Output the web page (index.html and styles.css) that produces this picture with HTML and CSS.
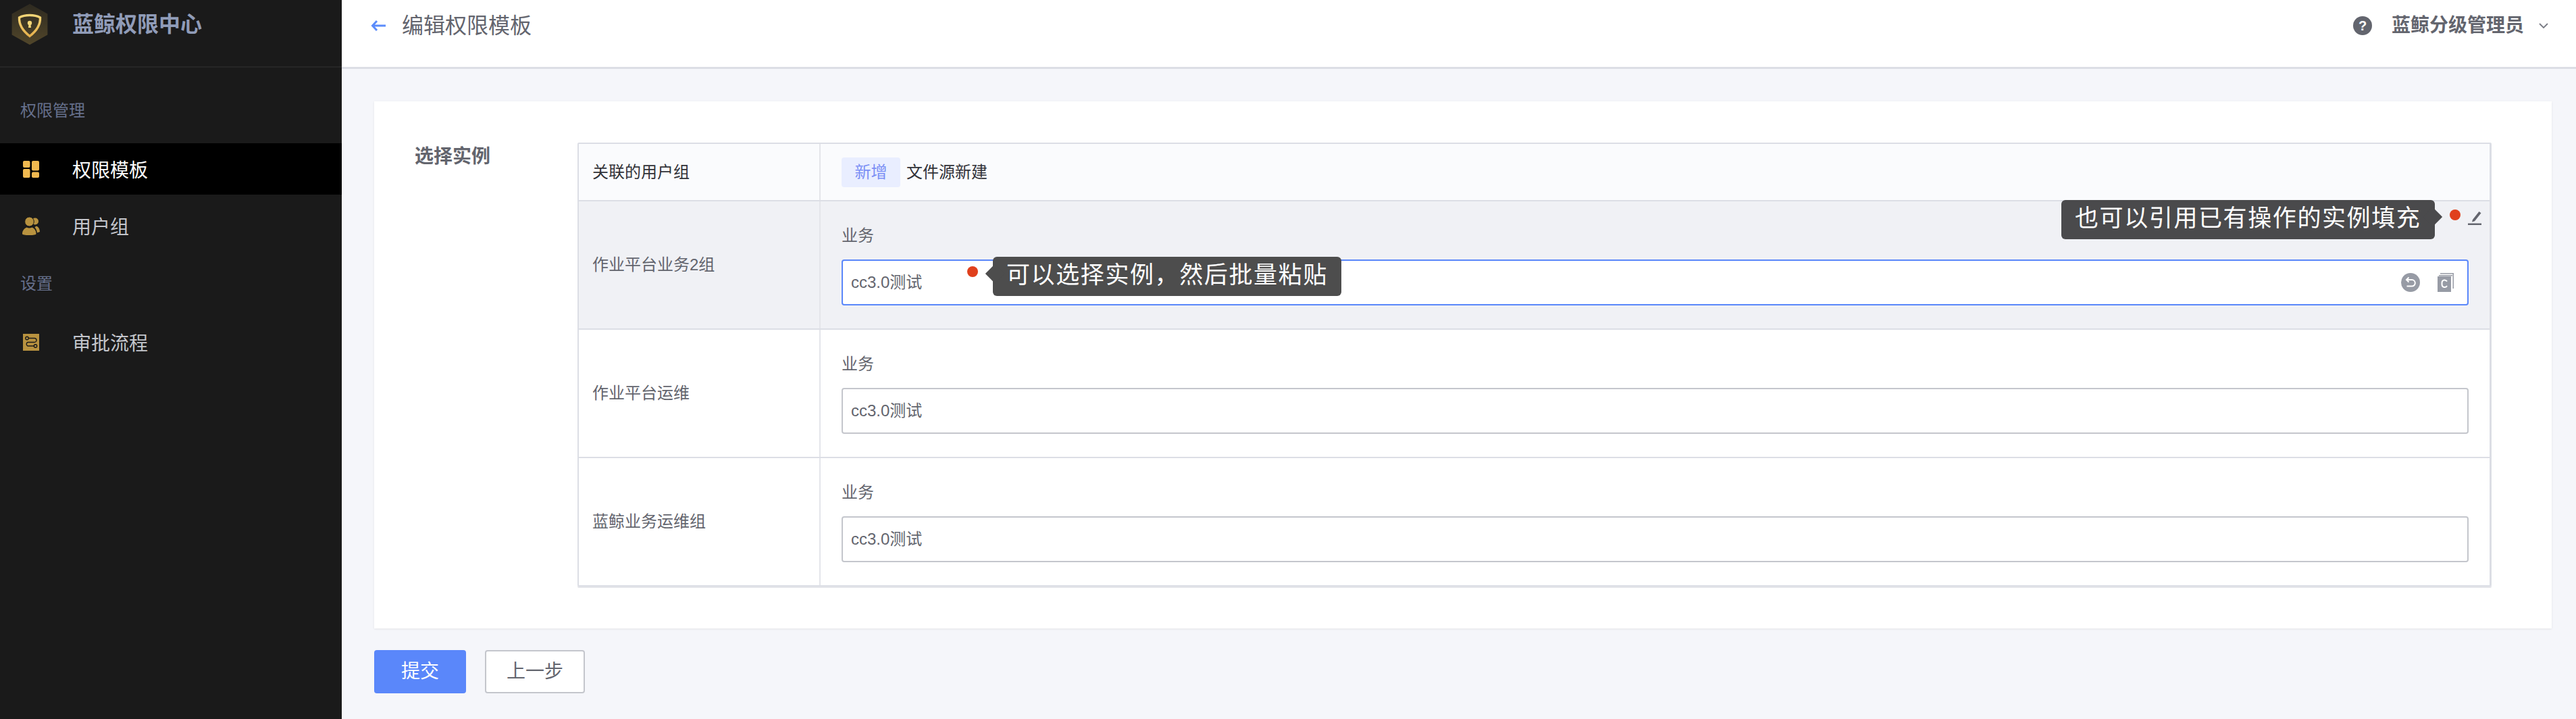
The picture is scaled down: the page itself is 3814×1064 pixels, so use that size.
FILE: index.html
```html
<!DOCTYPE html>
<html lang="zh-CN">
<head>
<meta charset="utf-8">
<title>编辑权限模板</title>
<link rel="stylesheet" href="styles.css">
</head>
<body>
<div class="app">
  <aside class="sidebar">
    <div class="brand">
      <svg class="brand-logo" viewBox="0 0 54 62" aria-hidden="true">
        <defs>
          <linearGradient id="hexFill" x1="0" y1="0" x2="0" y2="1">
            <stop offset="0" stop-color="#2e2a20"/>
            <stop offset="1" stop-color="#51462a"/>
          </linearGradient>
          <linearGradient id="shieldStroke" x1="0" y1="0" x2="0" y2="1">
            <stop offset="0" stop-color="#f5d677"/>
            <stop offset="1" stop-color="#e5b04c"/>
          </linearGradient>
        </defs>
        <path d="M27 .8 53.4 15.5V46.500L27 61.200.6 46.500V15.500Z" fill="url(#hexFill)"/>
        <path d="M27 17.500c5.500 0 11 1 15.500 3.500 .5 10-4.500 19-15.500 27.500C16 40 11 31 11.500 21 16 18.500 21.500 17.500 27 17.500Z" fill="none" stroke="url(#shieldStroke)" stroke-width="3.400"/>
        <circle cx="27" cy="29" r="3.200" fill="#f5d677"/>
        <path d="M25.600 30h2.800l.6 6h-4z" fill="#f5d677"/>
      </svg>
      <span class="brand-name">蓝鲸权限中心</span>
    </div>
    <nav class="nav">
      <div class="nav-section">权限管理</div>
      <a class="nav-item is-active">
        <svg class="nav-icon" viewBox="0 0 24 25" aria-hidden="true" fill="#f0b950">
          <rect x="0" y="0" width="10.500" height="10" rx="2"/>
          <rect x="0" y="12" width="10.500" height="13" rx="2"/>
          <rect x="13" y="0" width="11" height="14.500" rx="2"/>
          <rect x="13" y="16.500" width="11" height="8.500" rx="2"/>
        </svg>
        <span>权限模板</span>
      </a>
      <a class="nav-item nav-item-next">
        <svg class="nav-icon nav-icon-users" viewBox="0 0 26 27" aria-hidden="true" fill="#b8923f">
          <circle cx="19" cy="6.500" r="5"/>
          <path d="M20.500 13.500c3.500 1 5.200 4 5.500 8.500l-4 1.500c-.5-3.500-1.700-6-3.500-8Z"/>
          <ellipse cx="10.500" cy="7" rx="6.800" ry="7" stroke="#1a1a1a" stroke-width="1"/>
          <path d="M0 25c0-4.500 2.700-8 6.500-9.500 2.200 1.300 5.800 1.300 8 0 3.800 1.500 6 5 6 9.500 0 1.500-4 2-10.250 2S0 26.500 0 25Z"/>
        </svg>
        <span>用户组</span>
      </a>
      <div class="nav-section">设置</div>
      <a class="nav-item">
        <svg class="nav-icon" viewBox="0 0 24 25" aria-hidden="true">
          <rect width="24" height="25" fill="#b8923f"/>
          <g fill="none" stroke="#1a1a1a" stroke-width="1.400">
            <circle cx="6" cy="6.500" r="2.200"/>
            <circle cx="18.500" cy="18" r="2.200"/>
            <path d="M8.200 6.500H17a3 3 0 0 1 0 6H7a3 3 0 0 0 0 5.500h9.300"/>
          </g>
        </svg>
        <span>审批流程</span>
      </a>
    </nav>
  </aside>

  <div class="main">
    <header class="topbar">
      <svg class="back-icon" viewBox="0 0 22 18" aria-hidden="true">
        <path d="M9 2 2.500 9 9 16M3 9h19" fill="none" stroke="#5b8cfb" stroke-width="3"/>
      </svg>
      <h1 class="page-title">编辑权限模板</h1>
      <div class="topbar-right">
        <span class="help-icon">?</span>
        <span class="user-name">蓝鲸分级管理员</span>
        <svg class="chevron" viewBox="0 0 14 8" aria-hidden="true">
          <path d="M1 1l6 6 6-6" fill="none" stroke="#7a7c85" stroke-width="1.800"/>
        </svg>
      </div>
    </header>

    <main class="content">
      <section class="card">
        <div class="field-label">选择实例</div>
        <div class="table">
          <div class="row row-head">
            <div class="cell-group cell-group-head">关联的用户组</div>
            <div class="cell-action">
              <span class="tag">新增</span>
              <span class="action-name">文件源新建</span>
            </div>
          </div>

          <div class="row row-body is-selected">
            <div class="cell-group">作业平台业务2组</div>
            <div class="cell-body">
              <div class="inst-label">业务</div>
              <div class="input is-focus">
                <span>cc3.0测试</span>
                <svg class="input-icon" viewBox="0 0 28 28" aria-hidden="true">
                  <circle cx="14" cy="14" r="14" fill="#979ba5"/>
                  <path d="M11.500 6.500 8 10l3.500 3.500M8.500 10h7.500a4.800 4.800 0 0 1 0 9.600H8.500" fill="none" stroke="#fff" stroke-width="2"/>
                </svg>
                <svg class="input-icon copy-icon" viewBox="0 0 24 28" aria-hidden="true">
                  <path d="M4 0h20v23h-1.500V1.500H4Z" fill="#979ba5"/>
                  <path d="M2 3h20v1.500H2Z" fill="#979ba5"/>
                  <rect y="5" width="20" height="23" fill="#979ba5"/>
                  <path d="M14 12.500a4 4 0 0 0-7.500 2v2.500a4 4 0 0 0 7.500 2" fill="none" stroke="#fff" stroke-width="2"/>
                </svg>
              </div>
            </div>
            <span class="dot dot-a"></span>
            <div class="tip tip-a">可以选择实例，然后批量粘贴</div>
            <div class="tip tip-b">也可以引用已有操作的实例填充</div>
            <span class="dot dot-b"></span>
            <svg class="edit-icon" viewBox="0 0 20 20" aria-hidden="true">
              <path d="M6 13 15.500 1l3 2.200L9 15.200l-4 1.300Z" fill="#63656e" transform="translate(1 -1)"/>
              <rect y="17.500" width="20" height="2.500" fill="#63656e"/>
            </svg>
          </div>

          <div class="row row-body">
            <div class="cell-group">作业平台运维</div>
            <div class="cell-body">
              <div class="inst-label">业务</div>
              <div class="input"><span>cc3.0测试</span></div>
            </div>
          </div>

          <div class="row row-body row-last">
            <div class="cell-group">蓝鲸业务运维组</div>
            <div class="cell-body">
              <div class="inst-label">业务</div>
              <div class="input"><span>cc3.0测试</span></div>
            </div>
          </div>
        </div>
      </section>

      <div class="actions">
        <button class="btn btn-primary" type="button">提交</button>
        <button class="btn btn-default" type="button">上一步</button>
      </div>
    </main>
  </div>
</div>
</body>
</html>
```
FILE: styles.css
```css
* { box-sizing: border-box; }
html, body { margin: 0; padding: 0; }
body {
  width: 3814px;
  height: 1064px;
  overflow: hidden;
  background: #f5f6fa;
  color: #63656e;
  font-family: "Liberation Sans", "Noto Sans CJK SC", sans-serif;
  font-size: 24px;
}
.app { display: flex; height: 1064px; }

/* Sidebar */
.sidebar { width: 506px; flex: none; background: #1a1a1a; }
.brand {
  height: 100px;
  display: flex;
  align-items: flex-start;
  padding: 5px 0 0 17px;
  border-bottom: 2px solid #262626;
}
.brand-logo { width: 54px; height: 62px; flex: none; }
.brand-name {
  margin: 10px 0 0 36px;
  font-size: 32px;
  line-height: 42px;
  font-weight: 700;
  color: #909cb8;
}
.nav { padding-top: 16px; }
.nav-section {
  height: 96px;
  line-height: 96px;
  padding-left: 30px;
  font-size: 24px;
  color: #66708c;
}
.nav-item {
  height: 76px;
  display: flex;
  align-items: center;
  padding-left: 34px;
  font-size: 28px;
  color: #c4c6cc;
}
.nav-item-next { margin-top: 8px; }
.nav-item.is-active { background: #000; color: #fff; }
.nav-icon { width: 24px; height: 25px; flex: none; margin-right: 49px; }
.nav-icon-users { width: 26px; height: 27px; margin: 0 48px 0 -1px; }

/* Top bar */
.main { flex: 1; min-width: 0; display: flex; flex-direction: column; }
.topbar {
  height: 102px;
  flex: none;
  display: flex;
  align-items: center;
  padding: 0 41px 24px 43px;
  background: #fff;
  border-bottom: 3px solid #dcdee5;
}
.back-icon { width: 22px; height: 18px; flex: none; margin-right: 24px; }
.page-title {
  margin: 0;
  font-size: 32px;
  line-height: 42px;
  font-weight: 400;
  color: #63656e;
}
.topbar-right { margin-left: auto; display: flex; align-items: center; }
.help-icon {
  width: 28px;
  height: 28px;
  border-radius: 50%;
  background: #63656e;
  color: #fff;
  font-size: 20px;
  font-weight: 700;
  line-height: 28px;
  text-align: center;
}
.user-name {
  margin-left: 29px;
  font-size: 28px;
  line-height: 40px;
  font-weight: 700;
  color: #63656e;
}
.chevron { width: 14px; height: 8px; margin-left: 22px; }

/* Content */
.content { padding: 48px 36px 0 48px; }
.card {
  height: 780px;
  display: flex;
  align-items: flex-start;
  padding: 61px 89px 0 60px;
  background: #fff;
  box-shadow: 0 1px 3px rgba(0, 0, 0, .08);
}
.field-label {
  width: 241px;
  flex: none;
  margin-top: 3px;
  font-size: 28px;
  line-height: 36px;
  font-weight: 700;
  color: #63656e;
}

/* Table */
.table {
  flex: 1;
  border: 2px solid #dcdee5;
  border-right-width: 3px;
  border-radius: 2px;
  box-shadow: 0 2px 0 #e4e5ea;
}
.row { position: relative; display: flex; border-bottom: 2px solid #dcdee5; }
.row-head { height: 85px; background: #fafbfd; }
.row-body { height: 190px; background: #fff; }
.row-last { border-bottom: 0; height: 188px; }
.is-selected { background: #f0f1f5; }
.cell-group {
  width: 358px;
  flex: none;
  display: flex;
  align-items: center;
  padding-left: 20px;
  border-right: 2px solid #e4e5ea;
  line-height: 32px;
  color: #63656e;
}
.cell-group-head { color: #313238; }
.cell-action {
  flex: 1;
  display: flex;
  align-items: center;
  padding-left: 31px;
  color: #313238;
}
.tag {
  width: 87px;
  height: 44px;
  margin-right: 9px;
  border-radius: 4px;
  background: #e9eeff;
  color: #7b8ff5;
  line-height: 44px;
  text-align: center;
}
.action-name { line-height: 32px; }
.cell-body { flex: 1; padding: 35px 31px 0 31px; }
.inst-label { height: 32px; line-height: 32px; margin-bottom: 19px; }
.input {
  height: 68px;
  display: flex;
  align-items: center;
  padding: 0 20px 0 12px;
  background: #fff;
  border: 2px solid #c4c6cc;
  border-radius: 4px;
  line-height: 32px;
}
.input.is-focus { border-color: #5a87fa; }
.input span { flex: 1; }
.input-icon { width: 28px; height: 28px; flex: none; }
.copy-icon { width: 24px; margin-left: 26px; }

/* Annotations over the table */
.tip {
  position: absolute;
  height: 58px;
  padding-left: 20px;
  border-radius: 6px;
  background: #4d4d4d;
  color: #fff;
  font-size: 35px;
  line-height: 54px;
  letter-spacing: 1.600px;
  white-space: nowrap;
}
.tip::after {
  content: "";
  position: absolute;
  top: 50%;
  width: 20px;
  height: 20px;
  margin-top: -14px;
  background: #4d4d4d;
  transform: rotate(45deg);
}
.tip-a { left: 613px; top: 82px; width: 516px; }
.tip-a::after { left: -7px; }
.tip-b { left: 2195px; top: -2px; width: 553px; background: #4a4a4c; }
.tip-b::after { right: -7px; background: #4a4a4c; }
.dot {
  position: absolute;
  width: 16px;
  height: 16px;
  border-radius: 50%;
  background: #e0401c;
}
.dot-a { left: 575px; top: 96px; }
.dot-b { left: 2770px; top: 12px; }
.edit-icon { position: absolute; left: 2797px; top: 15px; width: 20px; height: 20px; }

/* Buttons */
.actions { display: flex; gap: 28px; margin-top: 32px; }
.btn {
  height: 64px;
  padding: 0;
  border-radius: 4px;
  font-family: inherit;
  font-size: 28px;
  line-height: 40px;
}
.btn-primary { width: 136px; background: #5a87fa; border: 0; color: #fff; }
.btn-default { width: 148px; background: #fff; border: 2px solid #c4c6cc; color: #63656e; }
```
